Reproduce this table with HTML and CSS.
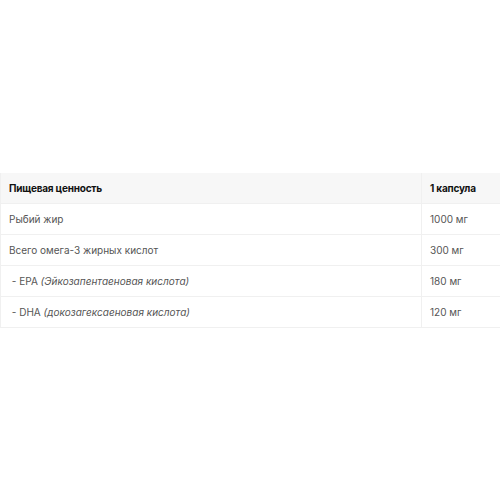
FILE: index.html
```html
<!DOCTYPE html>
<html lang="ru">
<head>
<meta charset="utf-8">
<link rel="stylesheet" href="styles.css">
</head>
<body>
<div class="nutri">
  <div class="row head"><div class="c1">Пищевая ценность</div><div class="c2">1 капсула</div></div>
  <div class="row"><div class="c1">Рыбий жир</div><div class="c2">1000 мг</div></div>
  <div class="row"><div class="c1">Всего омега-3 жирных кислот</div><div class="c2">300 мг</div></div>
  <div class="row"><div class="c1">&nbsp;- EPA <em>(Эйкозапентаеновая кислота)</em></div><div class="c2">180 мг</div></div>
  <div class="row"><div class="c1">&nbsp;- DHA <em>(докозагексаеновая кислота)</em></div><div class="c2">120 мг</div></div>
</div>
</body>
</html>
```
FILE: styles.css
```css
html, body {
  margin: 0;
  background: #fff;
}
body {
  padding-top: 173px;
  font-family: Inter, "Liberation Sans", sans-serif;
}
.nutri {
  border-left: 1px solid #f0f0f0;
  border-bottom: 1px solid #f0f0f0;
}
.row {
  display: grid;
  grid-template-columns: 1fr 79px;
  height: 31px;
  box-sizing: border-box;
  border-top: 1px solid #f0f0f0;
  font-size: 10px;
  color: #555;
}
.row.head {
  height: 30px;
  border-top: none;
  background: #f7f7f7;
  font-weight: 700;
  color: #111;
  letter-spacing: -0.2px;
}
.c1, .c2 {
  display: flex;
  align-items: center;
  padding: 0 8px;
  white-space: pre;
}
.c2 {
  border-left: 1px solid #f0f0f0;
}
em {
  font-style: italic;
}
```
